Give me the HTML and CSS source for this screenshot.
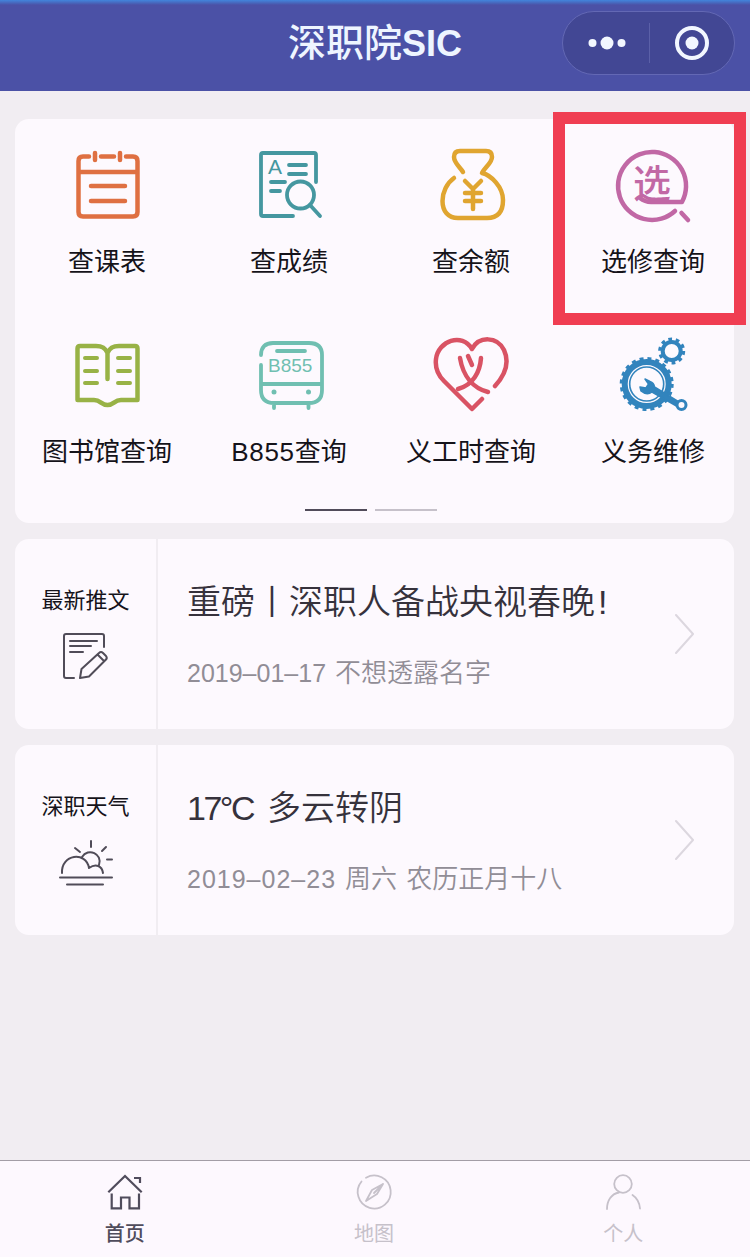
FILE: index.html
```html
<!DOCTYPE html>
<html lang="zh-CN">

<head>
    <meta charset="UTF-8">
    <meta name="viewport" content="width=device-width, initial-scale=1.0">
    <title>深职院SIC</title>
    <link rel="stylesheet" href="styles.css">
</head>

<body>
    <header class="top-bar">
        <h1>深职院<span>SIC</span></h1>
        <div class="capsule">
            <svg class="dots" width="40" height="16" viewBox="0 0 40 16">
                <circle cx="5.500" cy="8" r="4" />
                <circle cx="20" cy="8" r="6.500" />
                <circle cx="34.500" cy="8" r="4" />
            </svg>
            <i class="capsule-line"></i>
            <svg class="target" width="36" height="36" viewBox="0 0 36 36">
                <circle cx="18" cy="18" r="15" />
                <circle class="center" cx="18" cy="18" r="6.5" />
            </svg>
        </div>
    </header>

    <main>
        <section class="card menu-card">
            <div class="menu-grid">
                <a class="menu-item orange">
                    <svg viewBox="0 0 80 80">
                        <path d="M22 11.5H16q-4.5 0-4.5 4.500V67q0 4.500 4.500 4.500H66q4.500 0 4.500-4.500V16q0-4.500-4.500-4.500H59M34 11.500H47M28 8V15M53 8V15M12 27H70M24 41H58M24 56H58" />
                    </svg>
                    <span>查课表</span>
                </a>
                <a class="menu-item teal">
                    <svg viewBox="0 0 80 80">
                        <path d="M67 37V10q0-2-2-2H14q-2 0-2 2V69q0 2 2 2H44M40 20H57M40 29H57M22 37H36M22 46H31" />
                        <circle cx="51.500" cy="50" r="13.500" />
                        <path d="M61 60L71 71" />
                        <text class="grade" x="19" y="29">A</text>
                    </svg>
                    <span>查成绩</span>
                </a>
                <a class="menu-item gold">
                    <svg viewBox="0 0 80 80">
                        <path d="M32 27C29 22 23 18 23 12C23 8 25 6 29 6H55C59 6 61 8 61 12C61 18 54 22 51 28C60 30 72 42 72 55C72 67 67 73 56 73H27C17 73 11.500 66 11.500 56C11.500 47 16 38 23 33" />
                        <path d="M34 36L42 44L50 36M42 44V64M34 48H50M34 56H50" />
                    </svg>
                    <span>查余额</span>
                </a>
                <a class="menu-item purple marked">
                    <svg viewBox="0 0 80 80">
                        <path d="M27 53Q32 57 38 57H69A34 34 0 1 0 62 66M68.500 68L75 75" />
                        <text class="pick" x="20" y="52">选</text>
                    </svg>
                    <span>选修查询</span>
                </a>
                <a class="menu-item green">
                    <svg viewBox="0 0 80 80">
                        <path d="M40.500 44V18C38 12 34 11 29 11H13q-2.500 0-2.500 2.500V65H27C34 65 34 70 40.500 70C47 70 47 65 54 65H70.500V13.500q0-2.500-2.500-2.500H52C47 11 43 12 40.500 18" />
                        <path class="thin" d="M18 23H30M18 36H30M18 48H30M51 23H63M51 36H63M51 48H63" />
                    </svg>
                    <span>图书馆查询</span>
                </a>
                <a class="menu-item mint">
                    <svg viewBox="0 0 80 80">
                        <path d="M12 20Q12 8 24 8H60Q73 8 73 20V55Q73 68 60 68H25Q12 68 12 55V30M28 16H56M13 49H72M25 70V73M59.500 70V73" />
                        <circle class="solid" cx="25" cy="57" r="2.500" />
                        <circle class="solid" cx="59.500" cy="57" r="2.500" />
                        <text class="bus-no" x="19" y="37">B855</text>
                    </svg>
                    <span><b>B855</b>查询</span>
                </a>
                <a class="menu-item red">
                    <svg viewBox="0 0 80 80">
                        <path d="M51 64L41 74L13 46C6 39 4 32 5 24C7 6 31-3 41 14C48 1 66 1 73 15C79 28 74 40 64 51" />
                        <path d="M29 23C32 41 42 53 57 57M50 23C49 37 42 50 27 54M37 21L41 30" />
                    </svg>
                    <span>义工时查询</span>
                </a>
                <a class="menu-item blue">
                    <svg viewBox="0 0 80 80">
                        <circle class="wheel" cx="33.700" cy="49" r="22" />
                        <circle class="teeth" cx="33.700" cy="49" r="25" />
                        <circle class="ring" cx="33.700" cy="49" r="17" />
                        <circle class="small-wheel" cx="58.700" cy="16" r="9" />
                        <circle class="small-teeth" cx="58.700" cy="16" r="11.500" />
                        <path class="wrench" d="M32 44L37 46.500Q41 48 41.500 52L66 67L63.500 71L39 57Q34 61 28 56L27 52L33 53L35.500 49Z" />
                        <circle class="wrench-end" cx="68.500" cy="70" r="4.500" />
                    </svg>
                    <span>义务维修</span>
                </a>
            </div>
            <div class="pager"><i class="on"></i><i></i></div>
        </section>

        <section class="card info-card">
            <div class="info-left">
                <p>最新推文</p>
                <svg viewBox="0 0 60 60">
                    <path d="M48 21V10q0-2-2-2H10q-2 0-2 2V50q0 2 2 2H18M14 15H41M14 20H35M14 26H27" />
                    <path d="M24 52L25.500 43L43 27Q45 25 47 27L50 30Q51.500 32 50 33.500L33 50.500ZM42 29L48 35" />
                </svg>
            </div>
            <div class="info-right">
                <h2>重磅丨深职人备战央视春晚<em>!</em></h2>
                <p><span class="date">2019–01–17</span>不想透露名字</p>
            </div>
            <svg class="arrow" viewBox="0 0 20 40"><path d="M1 1L18 20L1 39" /></svg>
        </section>

        <section class="card info-card">
            <div class="info-left">
                <p>深职天气</p>
                <svg viewBox="0 0 60 60">
                    <path d="M6 41C5 22 30 19 33 36C40 31 46 34 47 41M26 25C32 15 47 22 43 33M35 9V15M19 16L24 20M50 15L46 19M51 27.500H56M4 45.500H56M11 52.500H47" />
                </svg>
            </div>
            <div class="info-right">
                <h2><b>17°C</b>多云转阴</h2>
                <p class="weather-day"><span class="date">2019–02–23</span>周六 农历正月十八</p>
            </div>
            <svg class="arrow" viewBox="0 0 20 40"><path d="M1 1L18 20L1 39" /></svg>
        </section>
    </main>

    <nav class="tab-bar">
        <a class="active">
            <svg viewBox="0 0 40 40"><path d="M3.300 20.300L20 4L36.700 20.300M29 6H35V11M6.700 21.500V36.300H16V25.500H24.500V36.300H34V21.500" /></svg>
            <span>首页</span>
        </a>
        <a>
            <svg viewBox="0 0 40 40">
                <path d="M7.500 9.500A16.500 16.500 0 1 0 12 5.700" />
                <path d="M29 12L23 22L12 29L18 18ZM29 12L20 21" />
            </svg>
            <span>地图</span>
        </a>
        <a>
            <svg viewBox="0 0 40 40">
                <circle cx="20" cy="12" r="8.800" />
                <path d="M4 37C4 29 8 22 16 20.500M29.500 23C34 26 36.500 31 37 36.500" />
            </svg>
            <span>个人</span>
        </a>
    </nav>
</body>

</html>
```
FILE: styles.css
```css
* {
    box-sizing: border-box;
}

body {
    margin: 0;
    height: 1257px;
    display: flex;
    flex-direction: column;
    overflow: hidden;
    font-family: "Liberation Sans", "Noto Sans CJK SC", sans-serif;
    background-color: #f1edf2;
    color: #15131a;
}

h1, h2, p {
    margin: 0;
    font-weight: normal;
}

svg {
    fill: none;
    stroke: currentColor;
    stroke-linecap: round;
    stroke-linejoin: round;
}

/* top bar */
.top-bar {
    position: relative;
    height: 91px;
    background: linear-gradient(#4285dc 0, #4b51a6 5px);
    text-align: center;
}

.top-bar h1 {
    font-size: 38px;
    line-height: 87px;
    font-weight: 500;
    color: #eef5ff;
}

.top-bar h1 span {
    font-size: 36px;
    font-weight: bold;
}

.capsule {
    position: absolute;
    top: 11px;
    right: 15px;
    width: 173px;
    height: 64px;
    border: 1px solid #6368b4;
    border-radius: 32px;
    background-color: #424794;
    display: flex;
    align-items: center;
    padding-left: 24px;
    color: #f2f7ff;
}

.capsule svg {
    fill: currentColor;
    stroke: none;
}

.capsule-line {
    width: 1px;
    height: 40px;
    margin: 0 24px 0 22px;
    background-color: #5b60a8;
}

.capsule .target {
    fill: none;
    stroke: currentColor;
    stroke-width: 4;
}

.target .center {
    fill: currentColor;
    stroke: none;
}

/* cards */
main {
    flex: 1;
    padding: 28px 16px 0 15px;
}

.card {
    background-color: #fdf9fe;
    border-radius: 14px;
    margin-bottom: 16px;
}

.menu-card {
    height: 404px;
    padding: 0 0 0 1px;
}

.menu-grid {
    display: grid;
    grid-template-columns: repeat(4, 182px);
    grid-auto-rows: 190px;
}

.menu-item {
    position: relative;
    display: flex;
    flex-direction: column;
    align-items: center;
    padding-top: 26px;
}

.menu-item svg {
    width: 80px;
    height: 80px;
    stroke-width: 4.5;
    overflow: visible;
}

.menu-item span {
    margin-top: 18px;
    font-size: 26px;
    line-height: 38px;
    white-space: nowrap;
    color: #15131a;
}

.menu-item b {
    font-weight: normal;
    letter-spacing: 0.7px;
}

.menu-item text {
    fill: currentColor;
    stroke: none;
}

.orange { color: #df7042; }
.teal { color: #4597a0; }
.gold { color: #e0a530; }
.purple { color: #c168a5; }
.green { color: #98b246; }
.mint { color: #70bfb1; }
.red { color: #d95364; }
.blue { color: #3284bd; }

.menu-item.teal svg { stroke-width: 3.8; }
.menu-item.mint svg { stroke-width: 3.8; }

.grade {
    font-size: 21px;
}

.pick {
    font-size: 38px;
    font-weight: 500;
}

.bus-no {
    font-size: 19px;
}

.menu-item .thin { stroke-width: 4; }
.menu-item .solid { fill: currentColor; stroke: none; }

/* the red frame around the selected entry */
.marked::after {
    content: "";
    box-sizing: border-box;
    position: absolute;
    left: -9px;
    top: -7px;
    width: 193px;
    height: 213px;
    border: 12px solid #f03e52;
}

.wheel { stroke-width: 6; }
.teeth { stroke-width: 4; stroke-linecap: butt; stroke-dasharray: 3.927 3.927; }
.ring { stroke-width: 1.6; }
.small-wheel { stroke-width: 4; }
.small-teeth { stroke-width: 4; stroke-linecap: butt; stroke-dasharray: 3.613 3.613; }
.wrench { fill: currentColor; stroke-width: 1.5; }
.wrench-end { stroke-width: 3; fill: #fdf9fe; }

.pager {
    display: flex;
    justify-content: center;
    gap: 8px;
    margin-top: 10px;
    padding-right: 8px;
}

.pager i {
    width: 62px;
    height: 2px;
    background-color: #c6c1ca;
}

.pager .on {
    background-color: #514c5a;
}

.info-card {
    height: 190px;
    display: flex;
}

.info-left {
    width: 143px;
    border-right: 2px solid #f1edf2;
    padding-top: 45px;
    display: flex;
    flex-direction: column;
    align-items: center;
}

.info-left p {
    font-size: 22px;
    line-height: 34px;
}

.info-left svg {
    width: 60px;
    height: 60px;
    margin-top: 8px;
    color: #504c58;
    stroke-width: 2;
}

.info-right {
    flex: 1;
    padding: 38px 0 0 29px;
    white-space: nowrap;
}

.info-right h2 {
    font-size: 34px;
    line-height: 50px;
    color: #36323c;
    font-weight: 350;
}

.info-right h2 b {
    font-weight: normal;
    margin-right: 14px;
    letter-spacing: -2.5px;
}

.info-right h2 em {
    font-style: normal;
    margin-left: 3px;
}

.info-right p {
    margin-top: 27px;
    font-size: 26px;
    line-height: 38px;
    color: #918d96;
    font-weight: 350;
}

.date {
    display: inline-block;
    width: 148px;
    font-size: 25px;
}

.weather-day {
    word-spacing: 2px;
}

.weather-day .date {
    width: 158px;
    letter-spacing: 1px;
}

.arrow {
    width: 20px;
    height: 40px;
    margin: 75px 39px 0 0;
    color: #dcd7df;
    stroke-width: 2;
}

/* bottom tabs */
.tab-bar {
    height: 97px;
    border-top: 1px solid #a39da6;
    background-color: #fdf8fe;
    display: flex;
    padding-right: 2px;
}

.tab-bar a {
    flex: 1;
    display: flex;
    flex-direction: column;
    align-items: center;
    padding-top: 11px;
    color: #c6c1ca;
}

.tab-bar svg {
    width: 40px;
    height: 40px;
    stroke-width: 1.8;
}

.tab-bar span {
    margin-top: 7px;
    font-size: 20px;
    line-height: 30px;
}

.tab-bar .active {
    color: #504c5c;
}

.tab-bar .active svg {
    stroke-linecap: butt;
    stroke-linejoin: miter;
    stroke-width: 2.2;
}

.tab-bar .active span {
    font-weight: 500;
}
```
